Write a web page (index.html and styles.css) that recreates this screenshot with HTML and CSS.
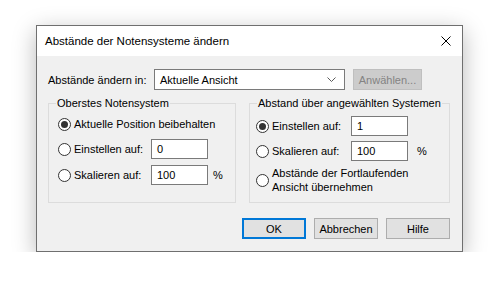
FILE: index.html
```html
<!DOCTYPE html>
<html lang="de">
<head>
<meta charset="utf-8">
<title>Abstände der Notensysteme ändern</title>
<link rel="stylesheet" href="styles.css">
</head>
<body>
<div class="dialog">
  <div class="titlebar">
    <span class="title">Abstände der Notensysteme ändern</span>
    <svg class="close" width="10" height="10" viewBox="0 0 10 10"><path d="M0.5 0.5 L9.5 9.5 M9.5 0.5 L0.5 9.5" stroke="#000" stroke-width="1" fill="none"/></svg>
  </div>
  <div class="content">
    <div class="toprow">
      <span class="toplabel">Abstände ändern in:</span>
      <div class="combo">
        <span class="combo-text">Aktuelle Ansicht</span>
        <svg class="chevron" width="9" height="5" viewBox="0 0 9 5"><path d="M0.5 0.5 L4.5 4.5 L8.5 0.5" stroke="#5a5a5a" stroke-width="1" fill="none"/></svg>
      </div>
      <span class="btn btn-disabled">Anwählen...</span>
    </div>
    <div class="groups">
      <fieldset class="group group-left">
        <legend class="legend">Oberstes Notensystem</legend>
        <div class="opts opts-left">
          <div class="opt"><span class="radio checked"></span><span class="optlabel">Aktuelle Position beibehalten</span></div>
          <div class="opt opt-second"><span class="radio"></span><span class="optlabel lw-left">Einstellen auf:</span><span class="field">0</span></div>
          <div class="opt opt-third"><span class="radio"></span><span class="optlabel lw-left">Skalieren auf:</span><span class="field">100</span><span class="unit">%</span></div>
        </div>
      </fieldset>
      <fieldset class="group group-right">
        <legend class="legend">Abstand über angewählten Systemen</legend>
        <div class="opts opts-right">
          <div class="opt"><span class="radio checked"></span><span class="optlabel lw-right">Einstellen auf:</span><span class="field">1</span></div>
          <div class="opt opt-r2"><span class="radio"></span><span class="optlabel lw-right">Skalieren auf:</span><span class="field">100</span><span class="unit unit-right">%</span></div>
          <div class="opt opt-multi"><span class="radio"></span><span class="optlabel">Abstände der Fortlaufenden<br>Ansicht übernehmen</span></div>
        </div>
      </fieldset>
    </div>
    <div class="buttons">
      <span class="btn btn-default">OK</span>
      <span class="btn">Abbrechen</span>
      <span class="btn">Hilfe</span>
    </div>
  </div>
</div>
</body>
</html>
```

FILE: styles.css
```css
html, body {
  margin: 0;
  padding: 0;
  background: #ffffff;
}

body {
  font-family: "Liberation Sans", Arial, sans-serif;
  font-size: 11px;
  color: #000;
}

.dialog {
  box-sizing: border-box;
  margin: 25px 0 0 36px;
  width: 427px;
  height: 227px;
  border: 1px solid #6f6f6f;
  background: #f0f0f0;
  box-shadow: 0 6px 22px rgba(0, 0, 0, 0.28);
  display: flex;
  flex-direction: column;
}

.titlebar {
  height: 30px;
  background: #ffffff;
  display: flex;
  align-items: center;
  padding: 0 11px 0 8px;
  font-size: 11.5px;
}

.title {
  flex: 1;
}

.close {
  display: block;
}

.content {
  padding: 13px 12px 0 11px;
  display: flex;
  flex-direction: column;
}

.toprow {
  display: flex;
  align-items: center;
  height: 21px;
}

.toplabel {
  width: 106px;
}

.combo {
  box-sizing: border-box;
  width: 191px;
  height: 21px;
  border: 1px solid #7a7a7a;
  background: #fff;
  display: flex;
  align-items: center;
  padding: 0 4px 0 5px;
}

.combo-text {
  flex: 1;
}

.chevron {
  display: block;
  margin-right: 4px;
}

.btn {
  box-sizing: border-box;
  display: flex;
  align-items: center;
  justify-content: center;
  width: 64px;
  height: 21px;
  border: 1px solid #adadad;
  background: #e1e1e1;
}

.btn-disabled {
  width: 69px;
  margin-left: 8px;
  background: #cccccc;
  border-color: #bfbfbf;
  color: #838383;
}

.btn-default {
  border: 2px solid #0078d7;
}

.groups {
  display: flex;
  gap: 13px;
  margin-top: 6px;
}

.group {
  box-sizing: border-box;
  margin: 0;
  padding: 0;
  height: 107px;
  border: 1px solid #dcdcdc;
  min-inline-size: 0;
}

.group-left {
  width: 188px;
}

.group-right {
  width: 201px;
}

.legend {
  margin-left: 7px;
  padding: 0 1px;
  line-height: 14px;
}

.opts {
  display: flex;
  flex-direction: column;
}

.opts-left {
  padding: 4px 0 0 9px;
}

.opts-right {
  padding: 6px 0 0 6px;
}

.opt {
  display: flex;
  align-items: center;
  height: 20px;
}

.opt-second {
  margin-top: 5px;
}

.opt-third {
  margin-top: 6px;
}

.opt-r2 {
  margin-top: 5px;
}

.opt-multi {
  margin-top: 5px;
  height: 28px;
  line-height: 14px;
}

.radio {
  box-sizing: border-box;
  width: 13px;
  height: 13px;
  border: 1px solid #333333;
  border-radius: 50%;
  background: #ffffff;
  margin-right: 3px;
  flex: none;
  display: flex;
  align-items: center;
  justify-content: center;
}

.radio.checked::after {
  content: "";
  width: 7px;
  height: 7px;
  border-radius: 50%;
  background: #333333;
}

.lw-left {
  width: 77px;
}

.lw-right {
  width: 79px;
}

.field {
  box-sizing: border-box;
  width: 57px;
  height: 20px;
  border: 1px solid #7a7a7a;
  background: #ffffff;
  padding-left: 5px;
  display: flex;
  align-items: center;
}

.unit {
  margin-left: 5px;
}

.unit-right {
  margin-left: 9px;
}

.buttons {
  display: flex;
  justify-content: flex-end;
  gap: 8px;
  margin-top: 15px;
}
```
